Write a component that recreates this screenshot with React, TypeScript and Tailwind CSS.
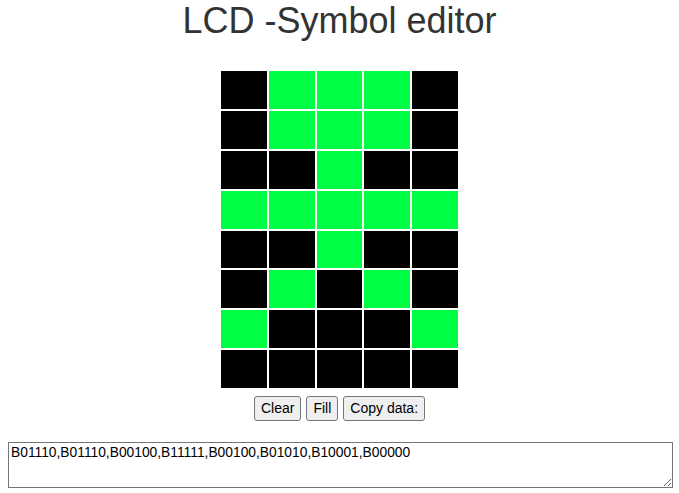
import { useState } from "react";

// 5x8 Zeichen-Editor: Klick toggelt Pixel, Daten als B-Bitstrings.

const START = ["01110", "01110", "00100", "11111", "00100", "01010", "10001", "00000"];

export default function App() {
  const [rows, setRows] = useState<string[]>(START);

  const toggle = (r: number, c: number) => {
    setRows((prev) =>
      prev.map((row, i) =>
        i !== r ? row : row.split("").map((b, j) => (j === c ? (b === "1" ? "0" : "1") : b)).join("")
      )
    );
  };

  const data = rows.map((r) => "B" + r).join(",");

  return (
    <div className="px-2 font-['Liberation_Sans',Arial,sans-serif] text-[#333]">
      <h1 className="text-center text-[36px] leading-[41px]">LCD -Symbol editor</h1>

      <div className="mx-auto mt-[30px] grid h-[317px] w-[237px] grid-cols-5 grid-rows-8 gap-[2px] bg-white">
        {rows.map((row, r) =>
          row.split("").map((b, c) => (
            <div
              key={r + "-" + c}
              onClick={() => toggle(r, c)}
              className={b === "1" ? "cursor-pointer bg-[#00ff44]" : "cursor-pointer bg-black"}
            />
          ))
        )}
      </div>

      <div className="mt-[8px] flex justify-center gap-[5px] text-[14px] text-black">
        <button
          onClick={() => setRows(START.map(() => "00000"))}
          className="h-[25px] rounded-[3px] border border-[#767676] bg-[#efefef] px-[6px] leading-[17px]"
        >
          Clear
        </button>
        <button
          onClick={() => setRows(START.map(() => "11111"))}
          className="h-[25px] rounded-[3px] border border-[#767676] bg-[#efefef] px-[6px] leading-[17px]"
        >
          Fill
        </button>
        <button className="h-[25px] rounded-[3px] border border-[#767676] bg-[#efefef] px-[6px] leading-[17px]">
          Copy data:
        </button>
      </div>

      <textarea
        readOnly
        value={data}
        className="mt-[21px] block h-[46px] w-[665px] border border-[#767676] px-[2px] py-[2px] text-[13.8px] leading-[15px] text-black"
      />
    </div>
  );
}
